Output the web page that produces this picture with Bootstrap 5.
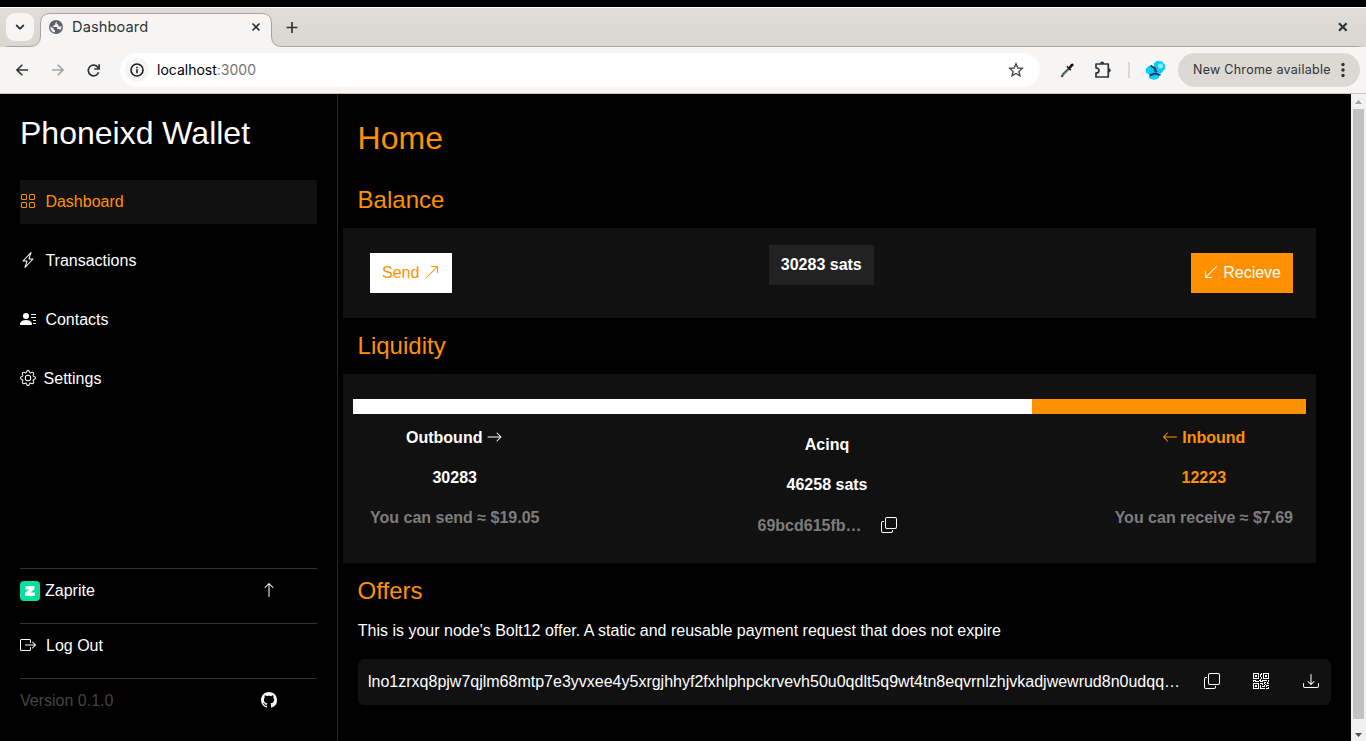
<!DOCTYPE html>
<html lang="en">
<head>
<meta charset="utf-8">
<title>Dashboard</title>
<link href="https://cdn.jsdelivr.net/npm/bootstrap@5.3.0/dist/css/bootstrap.min.css" rel="stylesheet">
<style>
html,body{height:741px;overflow:hidden}
body{background:#000;color:#fff;font:16px/24px "Liberation Sans",Arial,sans-serif}
svg{display:block;flex:none}
.topstrip{height:8px;background:#000;border-bottom:1px solid #fff}
.tabstrip{height:39px;background:linear-gradient(#e0dcd8,#dad6d0);color:#2e3436}
.tabshape{left:0;top:0}
.tabsearch{width:28px;height:28px;margin:5px 0 0 6px;border-radius:9px;background:#f6f5f4}
.apptab{width:232px;height:37px;margin-left:6px;padding:0 10px 0 9px}
.tabtitle{font:14.6px/20px Inter,sans-serif;letter-spacing:.1px;margin-left:9px}
.toolbar{height:47px;background:#f6f5f4;border-bottom:1px solid #c9c6c1;color:#2e3436}
.urlbar{width:920px;height:34px;border-radius:17px;background:#fff;font:14px/20px Inter,sans-serif;color:#000;padding:0 16px 0 5px}
.sitechip{width:24px;height:24px;border-radius:50%;background:#f6f5f4;margin-right:8px}
.urlbar .port{color:#757575}
.update{width:182px;height:34px;border-radius:17px;background:#dcd8d3;font:12.5px/20px Inter,sans-serif;letter-spacing:.27px;padding:0 9px 0 15px}
.app{height:647px}
.app svg{margin-bottom:2px}
.app .logo,.scroller svg{margin-bottom:0}
.side{width:338px;border-right:1px solid #262626;padding:20px 20px 0}
.brand{font-size:32px;line-height:38px;margin:0 0 28px}
.side .item{height:44px;margin-bottom:15px;color:#fff}
.side .item.on{background:#111;color:#ff9100}
.foot{border-top:1px solid #333;height:55px;padding-right:40px}
.foot > div{height:44px}
.main{width:1013px;padding:25px 20px 0 5px}
.main h1,.main h2{color:#ff9100;font-weight:400;margin:0 0 0 14.600px}
.main h1{font-size:32px;line-height:38px}
.main h2{font-size:24px;line-height:28px}
.panel{background:#111;width:973px}
.act{height:40px;border-radius:0;border:0;padding:0 12px;line-height:38px;gap:4.400px;font-size:16px;display:flex}
.total{background:#222;height:40px;line-height:39px;padding:0 12px;font-weight:700}
.meter{height:15px;background:#ff9100;margin:0 10px}
.meter > div{background:#fff;height:15px}
.stats{font-weight:700;text-align:center;padding:0 23px 0 27px}
.stats .ln{height:24px;margin-bottom:16px}
.dim{color:#7d7d7d}
.org{color:#ff9100}
.offer{background:#111;border-radius:6px;width:973px;height:46px;margin:16px 0 0 15px;padding:0 12px 0 10px}
.scroller{width:15px;background:#f1f1f1}
.thumb{width:11px;height:610px;background:#c1c1c1}
</style>
</head>
<body>
<svg width="0" height="0" class="position-absolute">
 <symbol id="copy" viewBox="0 0 16 16"><path fill="currentColor" fill-rule="evenodd" d="M4 2a2 2 0 0 1 2-2h8a2 2 0 0 1 2 2v8a2 2 0 0 1-2 2H6a2 2 0 0 1-2-2zm2-1a1 1 0 0 0-1 1v8a1 1 0 0 0 1 1h8a1 1 0 0 0 1-1V2a1 1 0 0 0-1-1zM2 5a1 1 0 0 0-1 1v8a1 1 0 0 0 1 1h8a1 1 0 0 0 1-1v-1h1v1a2 2 0 0 1-2 2H2a2 2 0 0 1-2-2V6a2 2 0 0 1 2-2h1v1z"/></symbol>
</svg>
<div class="topstrip"></div>
<div class="tabstrip d-flex position-relative">
 <svg class="tabshape position-absolute" width="1366" height="39"><path d="M0 47V45Q1 38.500 9 38.500H30Q40.500 38 40.500 28V15Q40.500 5.500 50 5.500H262Q271.500 5.500 271.500 15V28Q271.500 38.500 282 38.500H1357Q1365 38.500 1366 46V47Z" fill="#f6f5f4" stroke="#a5a7a4"/></svg>
 <div class="tabsearch position-relative d-flex align-items-center justify-content-center"><svg width="10" height="8" viewBox="0 0 10 8" fill="none" stroke="#2e3436" stroke-width="1.8"><path d="M1.200 2 5 5.800 8.800 2"/></svg></div>
 <div class="apptab position-relative d-flex align-items-center">
  <svg width="14" height="14" viewBox="0 0 14 14"><circle cx="7" cy="7" r="7" fill="#5f6368"/><path d="M8 1.400 6.200 3.200V5.300H4.300V7H8.200V9H10.300L11 10.500Q12.800 8.500 12.600 6L10.500 6.700 9.200 5.400V4.300H7.700V3ZM1.300 6.500 4.700 8.400V10.300H6V12.600Q1.500 12 1.300 6.500Z" fill="#f6f5f4"/></svg>
  <span class="tabtitle">Dashboard</span>
  <svg class="ms-auto" width="12" height="12" viewBox="0 0 12 12" stroke="#2e3436" stroke-width="1.700"><path d="M2.500 2.500 9.500 9.500M9.500 2.500 2.500 9.500"/></svg>
 </div>
 <svg class="position-relative" style="margin:14px 0 0 14px" width="12" height="11" viewBox="0 0 12 11" stroke="#2e3436" stroke-width="1.700"><path d="M6 0V11M.5 5.500H11.500"/></svg>
 <svg class="position-relative ms-auto me-3" style="margin-top:13px" width="14" height="12" viewBox="0 0 14 12" stroke="#2e3436" stroke-width="2.200"><path d="M3 2.200 10.600 9.800M10.600 2.200 3 9.800"/></svg>
</div>
<div class="toolbar d-flex align-items-center">
 <svg style="margin-left:16px" width="12" height="12" viewBox="0 0 12 12" fill="none" stroke="#2e3436" stroke-width="1.600"><path d="M12 6H1M6.300.7 1 6 6.300 11.300"/></svg>
 <svg style="margin-left:24px" width="12" height="12" viewBox="0 0 12 12" fill="none" stroke="#a3a5a5" stroke-width="1.600"><path d="M0 6H11M5.700.7 11 6 5.700 11.300"/></svg>
 <svg style="margin-left:23px" width="13" height="13" viewBox="0 0 13 13" fill="none" stroke="#2e3436" stroke-width="1.700"><path d="M11.600 8.200A5.300 5.300 0 1 1 11 3.500L11.500 4.300"/><path d="M12.100.3V5H7.300"/></svg>
 <div class="urlbar d-flex align-items-center" style="margin-left:20px">
  <div class="sitechip d-flex align-items-center justify-content-center"><svg width="14" height="14" viewBox="0 0 14 14" fill="none" stroke="#1f1f1f" stroke-width="1.600"><circle cx="7" cy="7" r="6"/><path d="M7 6.200V10.300M7 3.700V5.200"/></svg></div>
  <span>localhost<span class="port">:3000</span></span>
  <svg class="ms-auto" width="16" height="16" viewBox="0 0 16 16" fill="none" stroke="#474b4d" stroke-width="1.400"><path d="M8 1.800 9.800 6 14.300 6.400 10.900 9.400 11.900 13.900 8 11.500 4.100 13.900 5.100 9.400 1.700 6.400 6.200 6Z"/></svg>
 </div>
 <svg style="margin-left:20px" width="15" height="16" viewBox="0 0 15 16"><path d="M9 6.500 3.500 12 1.500 15" stroke="#3c4a44" stroke-width="2.200" fill="none"/><path d="M8.500 7.500 3 13" stroke="#3ba87a"/><path d="M7 4.300 10.800 8.300" stroke="#111" stroke-width="1.500"/><path d="M8.500 5.500 11 2Q13.800.5 13.700 3.300L10 7Z" fill="#111"/></svg>
 <svg style="margin-left:19px" width="18" height="18" viewBox="0 0 18 18" fill="none" stroke="#2e3436" stroke-width="1.700"><path d="M2 3H14.300V16H2V12.200Q5 11.800 5 9.500T2 6.800Z" stroke-linejoin="round"/><path d="M6.300 2.200Q8.200-.6 10 2.200ZM15 7.500Q18 9.500 15 11.300Z" fill="#2e3436" stroke-width="1"/></svg>
 <div style="width:2px;height:16px;margin-left:16px;background:#dcd8d3"></div>
 <svg style="margin-left:15px" width="21" height="21" viewBox="0 0 21 21"><circle cx="10.500" cy="10.500" r="10" fill="#fff"/><path d="M9 3 12 .8 17 1.500 20 5 20 9 16 13.500 14 13 14 18 9 20 3.500 18 5 15 1 13 .7 9 4 5.500 9 8Z" fill="#08cdfb"/><circle cx="15.500" cy="6" r="2.500" fill="#8be9ff"/><path d="M5.500 5.500 10 8.500 11 12M4.500 15.500 10 13.500 15.500 15M9 10 12 12" stroke="#123e68" stroke-width="2" fill="none"/></svg>
 <div class="update d-flex align-items-center justify-content-between" style="margin-left:12px"><span>New Chrome available</span><svg width="16" height="16" viewBox="0 0 16 16" fill="#2e3436"><circle cx="8" cy="2.500" r="1.700"/><circle cx="8" cy="8" r="1.700"/><circle cx="8" cy="13.500" r="1.700"/></svg></div>
</div>
<div class="app d-flex">
 <nav class="side d-flex flex-column">
  <h1 class="brand fw-normal">Phoneixd Wallet</h1>
  <a class="item on d-flex align-items-center text-decoration-none"><svg width="16" height="16" viewBox="0 0 16 16" fill="currentColor"><path d="M1 2.500A1.500 1.500 0 0 1 2.500 1h3A1.500 1.500 0 0 1 7 2.500v3A1.500 1.500 0 0 1 5.500 7h-3A1.500 1.500 0 0 1 1 5.500zM2.500 2a.5.5 0 0 0-.5.5v3a.5.5 0 0 0 .5.5h3a.5.5 0 0 0 .5-.5v-3a.5.5 0 0 0-.5-.5zm6.500.5A1.500 1.500 0 0 1 10.500 1h3A1.500 1.500 0 0 1 15 2.500v3A1.500 1.500 0 0 1 13.500 7h-3A1.500 1.500 0 0 1 9 5.500zm1.500-.5a.5.5 0 0 0-.5.5v3a.5.5 0 0 0 .5.5h3a.5.5 0 0 0 .5-.5v-3a.5.5 0 0 0-.5-.5zM1 10.500A1.500 1.500 0 0 1 2.500 9h3A1.500 1.500 0 0 1 7 10.500v3A1.500 1.500 0 0 1 5.500 15h-3A1.500 1.500 0 0 1 1 13.500zm1.500-.5a.5.5 0 0 0-.5.5v3a.5.5 0 0 0 .5.5h3a.5.5 0 0 0 .5-.5v-3a.5.5 0 0 0-.5-.5zm6.500.5A1.500 1.500 0 0 1 10.500 9h3a1.500 1.500 0 0 1 1.500 1.500v3a1.500 1.500 0 0 1-1.500 1.500h-3A1.500 1.500 0 0 1 9 13.500zm1.500-.5a.5.5 0 0 0-.5.5v3a.5.5 0 0 0 .5.5h3a.5.5 0 0 0 .5-.5v-3a.5.5 0 0 0-.5-.5z"/></svg><span style="margin-left:9.400px">Dashboard</span></a>
  <a class="item d-flex align-items-center text-decoration-none"><svg width="16" height="16" viewBox="0 0 16 16" fill="currentColor"><path d="M11.251.068a.5.5 0 0 1 .227.58L9.677 6.500H13a.5.5 0 0 1 .364.843l-8 8.500a.5.5 0 0 1-.842-.49L6.323 9.500H3a.5.5 0 0 1-.364-.843l8-8.500a.5.5 0 0 1 .615-.09zM4.157 8.500H7a.5.5 0 0 1 .478.647L6.110 13.590l5.732-6.090H9a.5.5 0 0 1-.478-.647L9.890 2.410z"/></svg><span style="margin-left:9.400px">Transactions</span></a>
  <a class="item d-flex align-items-center text-decoration-none"><svg width="16" height="16" viewBox="0 0 16 16" fill="currentColor"><path d="M6 8a3 3 0 1 0 0-6 3 3 0 0 0 0 6m-5 6s-1 0-1-1 1-4 6-4 6 3 6 4-1 1-1 1zM11 3.500a.5.5 0 0 1 .5-.5h4a.5.5 0 0 1 0 1h-4a.5.5 0 0 1-.5-.5m.5 2.500a.5.5 0 0 0 0 1h4a.5.5 0 0 0 0-1zm2 3a.5.5 0 0 0 0 1h2a.5.5 0 0 0 0-1zm0 3a.5.5 0 0 0 0 1h2a.5.5 0 0 0 0-1z"/></svg><span style="margin-left:9.400px">Contacts</span></a>
  <a class="item d-flex align-items-center text-decoration-none"><svg width="16" height="16" viewBox="0 0 16 16" fill="currentColor"><path d="M8 4.754a3.246 3.246 0 1 0 0 6.492 3.246 3.246 0 0 0 0-6.492M5.754 8a2.246 2.246 0 1 1 4.492 0 2.246 2.246 0 0 1-4.492 0"/><path d="M9.796 1.343c-.527-1.790-3.065-1.790-3.592 0l-.094.319a.873.873 0 0 1-1.255.52l-.292-.16c-1.640-.892-3.433.902-2.540 2.541l.159.292a.873.873 0 0 1-.52 1.255l-.319.094c-1.790.527-1.790 3.065 0 3.592l.319.094a.873.873 0 0 1 .52 1.255l-.16.292c-.892 1.640.901 3.434 2.541 2.540l.292-.159a.873.873 0 0 1 1.255.52l.094.319c.527 1.790 3.065 1.790 3.592 0l.094-.319a.873.873 0 0 1 1.255-.52l.292.16c1.640.893 3.434-.902 2.540-2.541l-.159-.292a.873.873 0 0 1 .52-1.255l.319-.094c1.790-.527 1.790-3.065 0-3.592l-.319-.094a.873.873 0 0 1-.52-1.255l.16-.292c.893-1.640-.902-3.433-2.541-2.540l-.292.159a.873.873 0 0 1-1.255-.52zm-2.633.283c.246-.835 1.428-.835 1.674 0l.094.319a1.873 1.873 0 0 0 2.693 1.115l.291-.16c.764-.415 1.600.42 1.184 1.185l-.159.292a1.873 1.873 0 0 0 1.116 2.692l.318.094c.835.246.835 1.428 0 1.674l-.319.094a1.873 1.873 0 0 0-1.115 2.693l.16.291c.415.764-.42 1.600-1.185 1.184l-.291-.159a1.873 1.873 0 0 0-2.693 1.116l-.094.318c-.246.835-1.428.835-1.674 0l-.094-.319a1.873 1.873 0 0 0-2.692-1.115l-.292.16c-.764.415-1.600-.42-1.184-1.185l.159-.291A1.873 1.873 0 0 0 1.945 8.930l-.319-.094c-.835-.246-.835-1.428 0-1.674l.319-.094A1.873 1.873 0 0 0 3.060 4.377l-.16-.292c-.415-.764.42-1.600 1.185-1.184l.292.159a1.873 1.873 0 0 0 2.692-1.115z"/></svg><span style="margin-left:7.600px">Settings</span></a>
  <div class="mt-auto">
   <div class="foot"><div class="d-flex align-items-center"><svg class="logo" width="20" height="20" viewBox="0 0 20 20"><rect width="20" height="20" rx="4" fill="#00e09e"/><path d="M5.500 5H14.500V8.200L10.500 11.600H14.800V15H5V11.800L9.200 8.400H5.500Z" fill="#fff"/></svg><span style="margin-left:5px">Zaprite</span><svg class="ms-auto" width="16" height="16" viewBox="0 0 16 16" fill="currentColor"><path fill-rule="evenodd" d="M8 15a.5.5 0 0 0 .5-.5V2.707l3.146 3.147a.5.5 0 0 0 .708-.708l-4-4a.5.5 0 0 0-.708 0l-4 4a.5.5 0 1 0 .708.708L7.500 2.707V14.500a.5.5 0 0 0 .5.5"/></svg></div></div>
   <div class="foot"><div class="d-flex align-items-center"><svg width="16" height="16" viewBox="0 0 16 16" fill="currentColor"><path fill-rule="evenodd" d="M10 12.500a.5.5 0 0 1-.5.5h-8a.5.5 0 0 1-.5-.5v-9a.5.5 0 0 1 .5-.5h8a.5.5 0 0 1 .5.5v2a.5.5 0 0 0 1 0v-2A1.500 1.500 0 0 0 9.500 2h-8A1.500 1.500 0 0 0 0 3.500v9A1.500 1.500 0 0 0 1.500 14h8a1.500 1.500 0 0 0 1.500-1.500v-2a.5.5 0 0 0-1 0z"/><path fill-rule="evenodd" d="M15.854 8.354a.5.5 0 0 0 0-.708l-3-3a.5.5 0 0 0-.708.708L14.293 7.500H5.500a.5.5 0 0 0 0 1h8.793l-2.147 2.146a.5.5 0 0 0 .708.708z"/></svg><span style="margin-left:10px">Log Out</span></div></div>
   <div class="foot" style="height:63px"><div class="d-flex align-items-center"><span style="color:#444">Version 0.1.0</span><svg class="ms-auto" width="16" height="16" viewBox="0 0 16 16" fill="currentColor"><path d="M8 0C3.580 0 0 3.580 0 8c0 3.540 2.290 6.530 5.470 7.590.4.070.55-.17.55-.38 0-.19-.01-.82-.01-1.490-2.010.37-2.530-.49-2.690-.94-.09-.23-.48-.94-.82-1.130-.28-.15-.68-.52-.01-.53.63-.01 1.080.58 1.230.82.72 1.210 1.870.87 2.330.66.070-.52.28-.87.51-1.070-1.780-.2-3.640-.89-3.640-3.950 0-.87.31-1.590.82-2.150-.08-.2-.36-1.020.08-2.120 0 0 .67-.21 2.200.82.64-.18 1.320-.27 2-.27s1.360.09 2 .27c1.530-1.040 2.200-.82 2.200-.82.44 1.100.16 1.920.08 2.120.51.56.82 1.270.82 2.150 0 3.070-1.870 3.750-3.650 3.950.29.25.54.73.54 1.480 0 1.070-.01 1.930-.01 2.200 0 .21.15.46.55.38A8.010 8.010 0 0 0 16 8c0-4.420-3.580-8-8-8"/></svg></div></div>
  </div>
 </nav>
 <main class="main">
  <h1>Home</h1>
  <h2 style="margin-top:29px">Balance</h2>
  <div class="panel d-flex justify-content-between" style="height:90px;margin-top:14px;padding:17px 23px 0 27px">
   <button class="btn act align-items-center bg-white org mt-2">Send <svg width="16" height="16" viewBox="0 0 16 16" fill="currentColor"><path fill-rule="evenodd" d="M14 2.500a.5.5 0 0 0-.5-.5h-6a.5.5 0 0 0 0 1h4.793L2.146 13.146a.5.5 0 0 0 .708.708L13 3.707V8.500a.5.5 0 0 0 1 0z"/></svg></button>
   <div class="total">30283 sats</div>
   <button class="btn act align-items-center text-white mt-2" style="background:#ff9100"><svg width="16" height="16" viewBox="0 0 16 16" fill="currentColor"><path fill-rule="evenodd" d="M2 13.500a.5.5 0 0 0 .5.5h6a.5.5 0 0 0 0-1H3.707L13.854 2.854a.5.5 0 0 0-.708-.708L3 12.293V7.500a.5.5 0 0 0-1 0z"/></svg>Recieve</button>
  </div>
  <h2 style="margin-top:14px">Liquidity</h2>
  <div class="panel" style="height:189px;margin-top:14px;padding-top:25px">
   <div class="meter"><div style="width:71.250%"></div></div>
   <div class="stats d-flex justify-content-between" style="padding-top:12px">
    <div><div class="ln d-flex justify-content-center align-items-center">Outbound<svg class="ms-1" width="17" height="16" viewBox="0 0 16 16" fill="currentColor"><path fill-rule="evenodd" d="M1 8a.5.5 0 0 1 .5-.5h11.793l-3.147-3.146a.5.5 0 0 1 .708-.708l4 4a.5.5 0 0 1 0 .708l-4 4a.5.5 0 0 1-.708-.708L13.293 8.500H1.500A.5.5 0 0 1 1 8"/></svg></div><div class="ln">30283</div><div class="dim">You can send ≈ $19.05</div></div>
    <div style="margin-top:7px"><div class="ln">Acinq</div><div class="ln">46258 sats</div><div class="dim d-flex align-items-center" style="height:26px"><span>69bcd615fb…</span><svg style="margin-left:19px;color:#fff" width="16" height="16"><use href="#copy"/></svg></div></div>
    <div class="org"><div class="ln d-flex justify-content-center align-items-center"><svg class="me-1" width="16" height="16" viewBox="0 0 16 16" fill="currentColor"><path fill-rule="evenodd" d="M15 8a.5.5 0 0 0-.5-.5H2.707l3.147-3.146a.5.5 0 1 0-.708-.708l-4 4a.5.5 0 0 0 0 .708l4 4a.5.5 0 0 0 .708-.708L2.707 8.500H14.500A.5.5 0 0 0 15 8"/></svg>Inbound</div><div class="ln">12223</div><div class="dim">You can receive ≈ $7.69</div></div>
   </div>
  </div>
  <h2 style="margin-top:14px">Offers</h2>
  <p style="margin:14px 0 0 14.800px">This is your node's Bolt12 offer. A static and reusable payment request that does not expire</p>
  <div class="offer d-flex align-items-center">
   <span class="text-truncate" style="width:822px">lno1zrxq8pjw7qjlm68mtp7e3yvxee4y5xrgjhhyf2fxhlphpckrvevh50u0qdlt5q9wt4tn8eqvrnlzhjvkadjwewrud8n0udqq…</span>
   <svg class="ms-auto" width="16" height="16"><use href="#copy"/></svg>
   <svg style="margin-left:33px" width="16" height="16" viewBox="0 0 16 16" fill="currentColor"><path d="M2 2h2v2H2z"/><path d="M6 0v6H0V0zM5 1H1v4h4zM4 12H2v2h2z"/><path d="M6 10v6H0v-6zm-5 1v4h4v-4zm11-9h2v2h-2z"/><path d="M10 0v6h6V0zm5 1v4h-4V1zM8 1V0h1v2H8v2H7V1zm0 5V4h1v2zM6 8V7h1V6h1v2h1V7h5v1h-4v1H7V8zm0 0v1H2V8H1v1H0V7h3v1zm10 1h-1V7h1zm-1 0h-1v2h2v-1h-1zm-4 0h2v1h-1v1h-1zm2 3v-1h-1v1h-1v1H9v1h3v-2zm0 0h3v1h-2v1h-1zm-4-1v1h1v-2H7v1z"/><path d="M7 12h1v3h4v1H7zm9 2v2h-3v-1h2v-1z"/></svg>
   <svg style="margin-left:34px" width="16" height="16" viewBox="0 0 16 16" fill="currentColor"><path d="M.5 9.900a.5.5 0 0 1 .5.5v2.500a1 1 0 0 0 1 1h12a1 1 0 0 0 1-1v-2.500a.5.5 0 0 1 1 0v2.500a2 2 0 0 1-2 2H2a2 2 0 0 1-2-2v-2.500a.5.5 0 0 1 .5-.5"/><path d="M7.646 11.854a.5.5 0 0 0 .708 0l3-3a.5.5 0 0 0-.708-.708L8.500 10.293V1.500a.5.5 0 0 0-1 0v8.793L5.354 8.146a.5.5 0 1 0-.708.708z"/></svg>
  </div>
 </main>
 <div class="scroller d-flex flex-column align-items-center justify-content-between">
  <svg width="15" height="15" viewBox="0 0 15 15"><path d="M4 10 7.500 6 11 10Z" fill="#a3a3a3"/></svg>
  <div class="thumb"></div>
  <svg width="15" height="22" viewBox="0 0 15 22"><path d="M4 14 7.500 18 11 14Z" fill="#505050"/></svg>
 </div>
</div>
</body>
</html>
